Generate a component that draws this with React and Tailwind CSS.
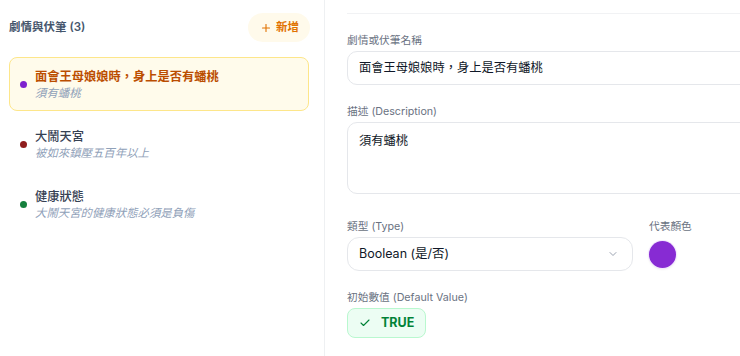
import React from 'react';
import { Plus, Check, ChevronDown } from 'lucide-react';

const font = { fontFamily: 'Inter, "Noto Sans CJK TC", sans-serif' };

const items = [
  { title: '面會王母娘娘時，身上是否有蟠桃', desc: '須有蟠桃', dot: 'bg-[#7e22ce]', active: true },
  { title: '大鬧天宮', desc: '被如來鎮壓五百年以上', dot: 'bg-[#8f1d1d]' },
  { title: '健康狀態', desc: '大鬧天宮的健康狀態必須是負傷', dot: 'bg-[#15803d]' },
];

const Label = ({ children }) => (
  <div className="h-[14px] mb-[3px] text-[10.7px] leading-[14px] text-gray-500">{children}</div>
);

export default function App() {
  return (
    <div className="w-[740px] h-[356px] overflow-hidden bg-white" style={font}>
      <div className="flex w-[820px] h-full">
        {/* left list */}
        <div className="w-[325px] shrink-0 h-full border-r border-[#eef0f2] pl-[9px] pr-[14px] pt-[13px]">
          <div className="flex items-center justify-between h-[29px] mb-[15px]">
            <span className="text-[11.5px] font-semibold text-slate-600">劇情與伏筆 (3)</span>
            <button className="flex items-center gap-[4px] h-[29px] pl-[12px] pr-[11px] rounded-full bg-[#fffaeb] text-[11.5px] font-bold text-amber-600">
              <Plus size={12} strokeWidth={2.2} />
              新增
            </button>
          </div>
          <div className="flex flex-col gap-[6px] pr-px">
            {items.map((it) => (
              <div
                key={it.title}
                className={
                  'flex items-center gap-[8px] h-[54px] pl-[10px] pr-3 rounded-lg border ' +
                  (it.active ? 'bg-[#fffbeb] border-[#fde68a]' : 'border-transparent')
                }
              >
                <span className={'w-[7px] h-[7px] rounded-full shrink-0 ' + it.dot}></span>
                <div className="flex flex-col">
                  <span
                    className={
                      'text-[12.25px] leading-[17px] ' +
                      (it.active ? 'font-bold text-amber-700' : 'font-medium text-gray-700')
                    }
                  >
                    {it.title}
                  </span>
                  <span className="text-[11.4px] leading-[16px] italic text-slate-400">{it.desc}</span>
                </div>
              </div>
            ))}
          </div>
        </div>

        {/* right form */}
        <div className="flex-1 px-[22px]">
          <div className="h-[14px] border-b border-[#f1f2f4] mb-[20px]"></div>
          <div className="w-[437px]">
            <Label>劇情或伏筆名稱</Label>
            <div className="h-[34px] flex items-center px-[11px] rounded-[10px] border border-gray-200 text-[12.25px] text-gray-900 mb-[20px]">
              面會王母娘娘時，身上是否有蟠桃
            </div>

            <Label>描述 (Description)</Label>
            <div className="h-[72px] px-[11px] pt-[9px] rounded-[10px] border border-gray-200 text-[12.25px] text-gray-900 mb-[26px]">
              須有蟠桃
            </div>

            <div className="grid grid-cols-3 gap-4 mb-[20px]">
              <div className="col-span-2">
                <Label>類型 (Type)</Label>
                <div className="h-[34px] flex items-center justify-between pl-[11px] pr-[13px] rounded-xl border border-gray-200 text-[12.5px] text-gray-900">
                  <span>Boolean (是/否)</span>
                  <ChevronDown size={12} className="text-gray-400" />
                </div>
              </div>
              <div>
                <Label>代表顏色</Label>
                <div className="h-[34px] flex items-center">
                  <span className="w-[27px] h-[27px] rounded-full bg-[#872bd3] ring-1 ring-purple-100 shadow-sm"></span>
                </div>
              </div>
            </div>

            <Label>初始數值 (Default Value)</Label>
            <button className="h-[30px] flex items-center gap-[10px] px-[11px] rounded-lg border border-green-200 bg-[#ecfdf3] text-[12.5px] font-bold text-green-700">
              <Check size={12} strokeWidth={2.2} />
              TRUE
            </button>
          </div>
        </div>
      </div>
    </div>
  );
}
